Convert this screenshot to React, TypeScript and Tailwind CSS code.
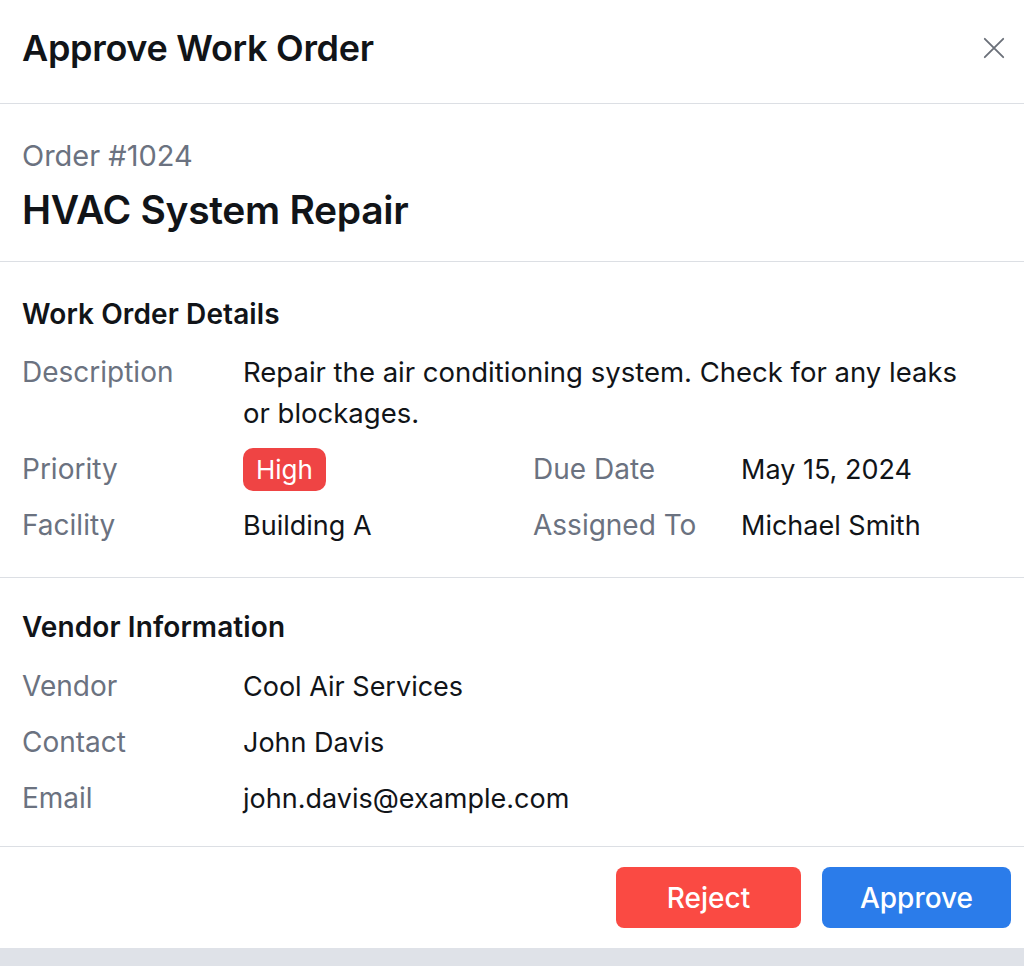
import React from "react";

const details = [
  { label: "Vendor", value: "Cool Air Services" },
  { label: "Contact", value: "John Davis" },
  { label: "Email", value: "john.davis@example.com" },
];

export default function App() {
  return (
    <div
      className="min-h-[966px] bg-[#dfe2e8] text-[#111418]"
      style={{ fontFamily: "Inter, 'Noto Sans', sans-serif" }}
    >
      <div className="bg-white">
        {/* header */}
        <div className="flex h-[104px] items-center justify-between border-b border-[#dcdfe4] pb-[7px] pl-[22px] pr-[17px]">
          <h1 className="text-[36px] font-semibold tracking-[-0.3px]">Approve Work Order</h1>
          <button className="text-[#6b7079]" aria-label="Close">
            <svg width="26" height="26" viewBox="0 0 24 24" fill="none" stroke="currentColor" strokeWidth="1.7" strokeLinecap="round">
              <path d="M3.5 3.5l17 17M20.5 3.5l-17 17" />
            </svg>
          </button>
        </div>

        {/* order */}
        <div className="border-b border-[#dcdfe4] px-[22px] pb-[28px] pt-[35px]">
          <div className="text-[29px] leading-[34px] text-[#6b7280]">Order #1024</div>
          <div className="mt-[14px] text-[39px] font-semibold leading-[46px] tracking-[-0.3px]">HVAC System Repair</div>
        </div>

        {/* work order details */}
        <div className="border-b border-[#dcdfe4] px-[22px] pb-[31px] pt-[35px]">
          <h2 className="text-[28px] font-semibold leading-[34px] tracking-[0.1px]">Work Order Details</h2>
          <div className="mt-[21px] grid grid-cols-[221px_290px_208px_1fr] items-center gap-y-[14px] leading-[41px]">
            <div className="self-start text-[28px] text-[#6b7280]">Description</div>
            <div className="col-span-3 pr-[20px] text-[27.5px]">
              Repair the air conditioning system. Check for any leaks or blockages.
            </div>
            <div className="text-[28px] text-[#6b7280]">Priority</div>
            <div className="flex">
              <span className="flex h-[43px] items-center rounded-[10px] bg-[#ef4444] px-[13px] text-[26px] leading-none text-white">
                High
              </span>
            </div>
            <div className="text-[28px] text-[#6b7280]">Due Date</div>
            <div className="text-[27px]">May 15, 2024</div>
            <div className="text-[28px] text-[#6b7280]">Facility</div>
            <div className="text-[27px]">Building A</div>
            <div className="text-[28px] text-[#6b7280]">Assigned To</div>
            <div className="text-[27px]">Michael Smith</div>
          </div>
        </div>

        {/* vendor */}
        <div className="border-b border-[#dcdfe4] px-[22px] pb-[27px] pt-[32px]">
          <h2 className="text-[28px] font-semibold leading-[34px] tracking-[0.1px]">Vendor Information</h2>
          <div className="mt-[22px] grid grid-cols-[221px_1fr] gap-y-[15px] leading-[41px]">
            {details.map((d) => (
              <React.Fragment key={d.label}>
                <div className="text-[28px] text-[#6b7280]">{d.label}</div>
                <div className="text-[27px]">{d.value}</div>
              </React.Fragment>
            ))}
          </div>
        </div>

        {/* footer */}
        <div className="flex justify-end gap-[21px] pb-[20px] pr-[13px] pt-[20px]">
          <button className="h-[61px] w-[185px] rounded-[8px] bg-[#fa4a43] text-[28px] font-medium text-white">
            Reject
          </button>
          <button className="h-[61px] w-[189px] rounded-[8px] bg-[#2b7cea] text-[28px] font-medium text-white">
            Approve
          </button>
        </div>
      </div>
    </div>
  );
}
